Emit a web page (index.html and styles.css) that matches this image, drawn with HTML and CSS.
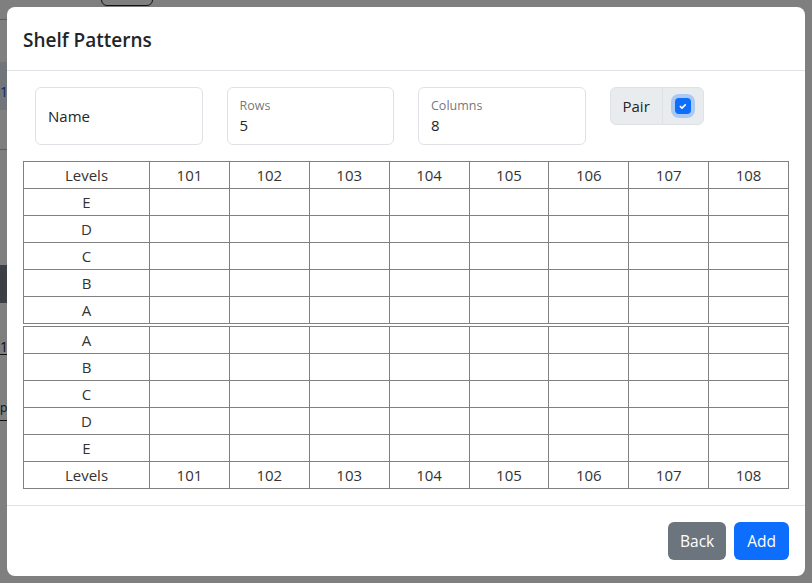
FILE: index.html
```html
<!DOCTYPE html>
<html>
<head>
<meta charset="utf-8">
<link rel="stylesheet" href="styles.css">
</head>
<body>
<div class="page">
  <div class="bg-btn"></div>
  <div class="bg-line l1"></div>
  <div class="bg-band light"><span>1</span></div>
  <div class="bg-line l2"></div>
  <div class="bg-band dark"></div>
  <div class="bg-one">1</div>
  <div class="bg-line l3"></div>
  <div class="bg-pa">pa</div>
  <div class="bg-line l4"></div>
</div>
<div class="backdrop"></div>
<div class="modal">
  <div class="modal-header">
    <h5 class="modal-title">Shelf Patterns</h5>
  </div>
  <div class="modal-body">
    <div class="form-row">
      <div class="col">
        <div class="floating empty"><span class="ph">Name</span></div>
      </div>
      <div class="col">
        <div class="floating"><span class="lbl">Rows</span><span class="val">5</span></div>
      </div>
      <div class="col">
        <div class="floating"><span class="lbl">Columns</span><span class="val">8</span></div>
      </div>
      <div class="col">
        <div class="input-group">
          <span class="ig-text">Pair</span>
          <span class="ig-check">
            <span class="checkbox">
              <svg viewBox="0 0 20 20" width="16" height="16"><path d="M6 10l3 3 6-6" fill="none" stroke="#fff" stroke-width="3" stroke-linecap="round" stroke-linejoin="round"/></svg>
            </span>
          </span>
        </div>
      </div>
    </div>
    <div class="tables">
      <table class="grid">
        <tr><td>Levels</td><td>101</td><td>102</td><td>103</td><td>104</td><td>105</td><td>106</td><td>107</td><td>108</td></tr>
        <tr><td>E</td><td></td><td></td><td></td><td></td><td></td><td></td><td></td><td></td></tr>
        <tr><td>D</td><td></td><td></td><td></td><td></td><td></td><td></td><td></td><td></td></tr>
        <tr><td>C</td><td></td><td></td><td></td><td></td><td></td><td></td><td></td><td></td></tr>
        <tr><td>B</td><td></td><td></td><td></td><td></td><td></td><td></td><td></td><td></td></tr>
        <tr><td>A</td><td></td><td></td><td></td><td></td><td></td><td></td><td></td><td></td></tr>
      </table>
      <table class="grid">
        <tr><td>A</td><td></td><td></td><td></td><td></td><td></td><td></td><td></td><td></td></tr>
        <tr><td>B</td><td></td><td></td><td></td><td></td><td></td><td></td><td></td><td></td></tr>
        <tr><td>C</td><td></td><td></td><td></td><td></td><td></td><td></td><td></td><td></td></tr>
        <tr><td>D</td><td></td><td></td><td></td><td></td><td></td><td></td><td></td><td></td></tr>
        <tr><td>E</td><td></td><td></td><td></td><td></td><td></td><td></td><td></td><td></td></tr>
        <tr><td>Levels</td><td>101</td><td>102</td><td>103</td><td>104</td><td>105</td><td>106</td><td>107</td><td>108</td></tr>
      </table>
    </div>
  </div>
  <div class="modal-footer">
    <button class="btn btn-secondary">Back</button>
    <button class="btn btn-primary">Add</button>
  </div>
</div>
</body>
</html>
```
FILE: styles.css
```css
html, body {
  margin: 0;
  padding: 0;
  width: 812px;
  height: 583px;
  overflow: hidden;
  font-family: "Open Sans", "Noto Sans", sans-serif;
  color: #212529;
  background: #fff;
}

.page {
  position: absolute;
  inset: 0;
  background: #fff;
}
.bg-btn {
  position: absolute;
  left: 101px;
  top: -20px;
  width: 50px;
  height: 24px;
  border: 1px solid #212529;
  border-radius: 6px;
}
.bg-line {
  position: absolute;
  left: 0;
  width: 20px;
  height: 1px;
  background: #bbb;
}
.l1 { top: 19px; }
.l2 { top: 149px; }
.l3 { top: 354px; background: #222; }
.l4 { top: 420px; background: #222; }
.bg-band {
  position: absolute;
  left: 0;
  width: 20px;
}
.bg-band.light {
  top: 62px;
  height: 48px;
  background: #e4ebf5;
}
.bg-band.light span {
  position: absolute;
  left: 0;
  top: 20px;
  font-size: 14px;
  color: #0a58ca;
}
.bg-band.dark {
  top: 265px;
  height: 38px;
  background: #78808a;
}
.bg-one {
  position: absolute;
  left: 0;
  top: 337px;
  font-size: 14px;
}
.bg-pa {
  position: absolute;
  left: 0;
  top: 399px;
  font-size: 12px;
}

.backdrop {
  position: absolute;
  inset: 0;
  background: rgba(0, 0, 0, 0.5);
}

.modal {
  position: absolute;
  left: 7px;
  top: 7px;
  width: 798px;
  height: 569px;
  background: #fff;
  border-radius: 8px;
  display: flex;
  flex-direction: column;
  box-sizing: border-box;
}

.modal-header {
  padding: 18px 16px 15px;
  border-bottom: 1px solid #dee2e6;
}
.modal-title {
  margin: 0;
  font-size: 19px;
  line-height: 30px;
  font-weight: 600;
  color: #212529;
}

.modal-body {
  padding: 16px 16px 15px;
  flex: 1;
}

.form-row {
  display: grid;
  grid-template-columns: repeat(4, 1fr);
}
.col {
  padding: 0 12px;
}
.floating {
  height: 58px;
  box-sizing: border-box;
  border: 1px solid #dee2e6;
  border-radius: 6px;
  display: flex;
  flex-direction: column;
  justify-content: flex-start;
  padding: 0 12px;
}
.floating.empty {
  justify-content: center;
}
.ph {
  font-size: 15px;
  line-height: 24px;
  color: #212529;
}
.lbl {
  font-size: 12.5px;
  line-height: 16px;
  margin-top: 10px;
  color: rgba(33, 37, 41, 0.65);
}
.val {
  font-size: 15px;
  line-height: 22px;
  color: #212529;
}

.input-group {
  display: inline-flex;
  height: 38px;
  box-sizing: border-box;
  border: 1px solid #dee2e6;
  border-radius: 6px;
  background: #e9ecef;
}
.ig-text {
  display: flex;
  align-items: center;
  padding: 0 12px 0 12px;
  font-size: 15px;
  color: #212529;
  border-right: 1px solid #dee2e6;
}
.ig-check {
  display: flex;
  align-items: center;
  padding: 0 12px;
}
.checkbox {
  width: 16px;
  height: 16px;
  box-sizing: border-box;
  border-radius: 4px;
  background: #0d6efd;
  box-shadow: 0 0 0 4px rgba(13, 110, 253, 0.28);
  display: flex;
  align-items: center;
  justify-content: center;
}
.checkbox svg {
  width: 11px;
  height: 11px;
}

.tables {
  margin-top: 16px;
  display: flex;
  flex-direction: column;
  gap: 2px;
}
.grid {
  width: 766px;
  border-collapse: collapse;
  table-layout: fixed;
}
.grid td {
  border: 1px solid #808080;
  padding: 0;
  text-align: center;
  font-size: 15px;
  line-height: 26px;
  color: #333;
  box-sizing: border-box;
}
.grid td:first-child {
  width: 126px;
}
.grid tr td {
  height: 27px;
}

.modal-footer {
  border-top: 1px solid #dee2e6;
  padding: 12px;
  display: flex;
  justify-content: flex-end;
}
.btn {
  margin: 4px;
  height: 38px;
  padding: 0 12px;
  border: none;
  border-radius: 6px;
  font-family: inherit;
  font-size: 15.5px;
  color: #fff;
}
.btn-secondary { background: #6c757d; }
.btn-primary { background: #0d6efd; padding: 0 13px; }
```
